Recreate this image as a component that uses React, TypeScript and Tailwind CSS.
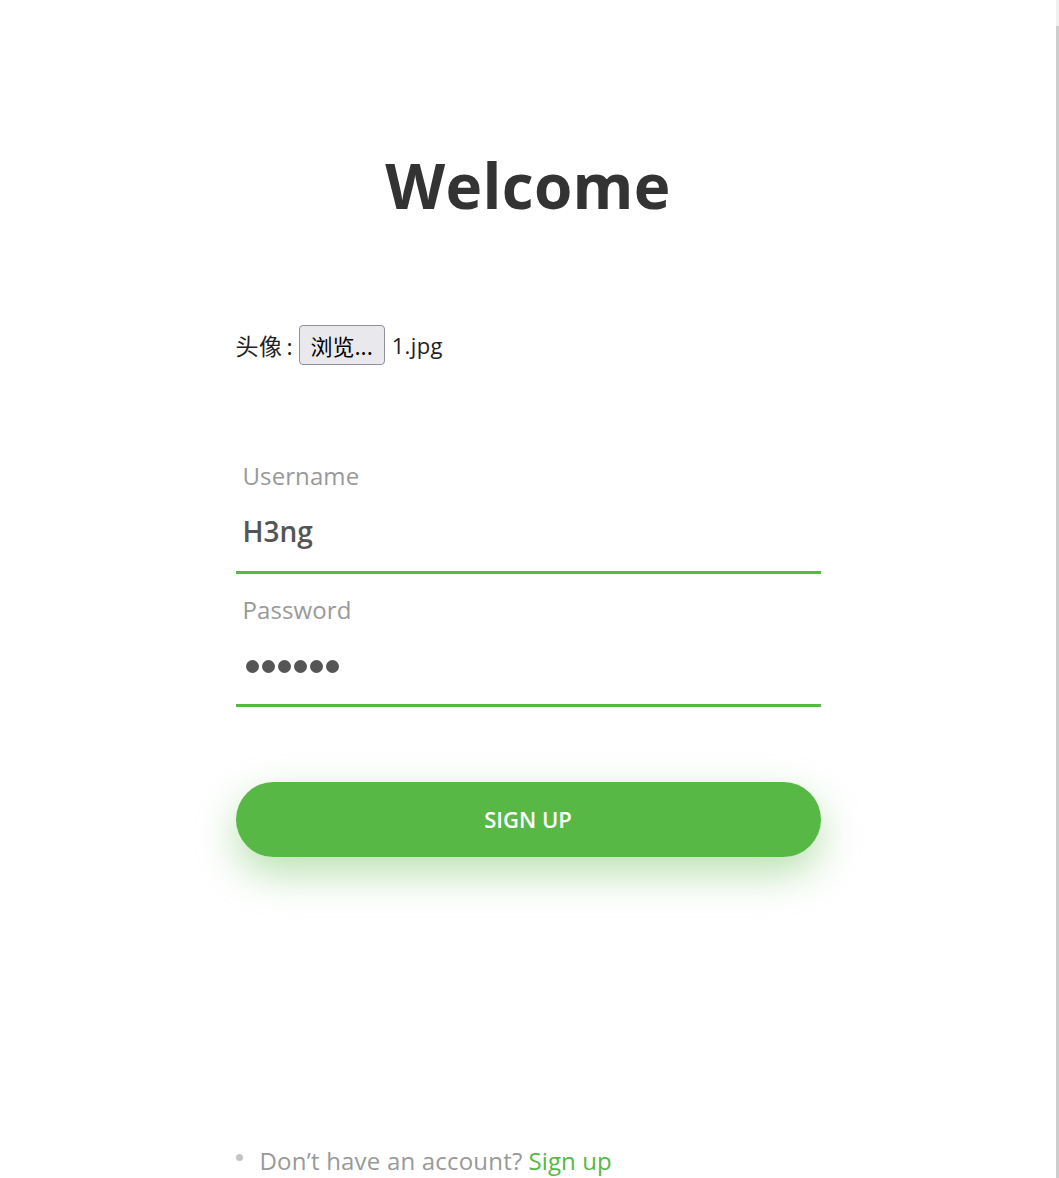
import React from "react";

export default function App() {
  return (
    <div className="flex min-h-[1178px] w-full bg-white" style={{ fontFamily: '"Open Sans", "Noto Sans CJK SC", sans-serif' }}>
      <main className="flex flex-1 justify-center">
        <div className="flex w-[585px] flex-col">
          <h1 className="mt-[147px] text-center text-[62px] font-bold leading-[77px] tracking-[0.3px] text-[#333333]">
            Welcome
          </h1>

          <div className="mt-[101px] flex h-[40px] items-center text-[22px] text-[#222222]">
            <span className="font-['Noto_Sans_CJK_SC',sans-serif] text-[23px] tracking-[0.5px]">头像</span>
            <span className="ml-[4px] font-['Noto_Sans_CJK_SC',sans-serif]">:</span>
            <span className="ml-[6px] flex h-[40px] w-[86px] items-center justify-center rounded-[4px] border border-[#8f8f9d] bg-[#e9e9ed] font-['Noto_Sans_CJK_SC',sans-serif] text-[22px] text-black">
              浏览...
            </span>
            <span className="ml-[7px] tracking-[0.4px]">1.jpg</span>
          </div>

          <div className="mt-[96px] border-b-[3px] border-[#57b846]">
            <div className="pl-[7px] text-[24px] leading-[30px] tracking-[0.1px] text-[#999999]">Username</div>
            <div className="flex h-[80px] items-center pl-[7px] text-[28px] font-semibold text-[#555555]">H3ng</div>
          </div>

          <div className="border-b-[3px] border-[#57b846] pt-[21px]">
            <div className="pl-[7px] text-[24px] leading-[30px] tracking-[0.1px] text-[#999999]">Password</div>
            <div className="flex h-[79px] items-center gap-[3px] pl-[10px] pt-[3px]">
              {[0, 1, 2, 3, 4, 5].map((i) => (
                <span key={i} className="h-[13px] w-[13px] rounded-full bg-[#555555]" />
              ))}
            </div>
          </div>

          <button className="mt-[75px] flex h-[75px] w-full items-center justify-center rounded-full bg-[#57b846] text-[22px] font-semibold tracking-[0px] text-white shadow-[0_16px_40px_0_rgba(87,184,70,0.42)]">
            SIGN UP
          </button>

          <div className="mt-[289px] flex items-center text-[24px] leading-[30px]">
            <span className="mr-[17px] h-[7px] w-[7px] -translate-y-[4px] rounded-full bg-[#c4c4c4]" />
            <span className="tracking-[0.2px] text-[#999999]">Don’t have an account?</span>
            <span className="ml-[6px] tracking-[0.1px] text-[#57b846]">Sign up</span>
          </div>
        </div>
      </main>
      <div className="flex w-[3px] flex-col">
        <div className="h-[26px] bg-[#f0f0f0]" />
        <div className="flex-1 bg-[#cdcdcd]" />
      </div>
    </div>
  );
}
